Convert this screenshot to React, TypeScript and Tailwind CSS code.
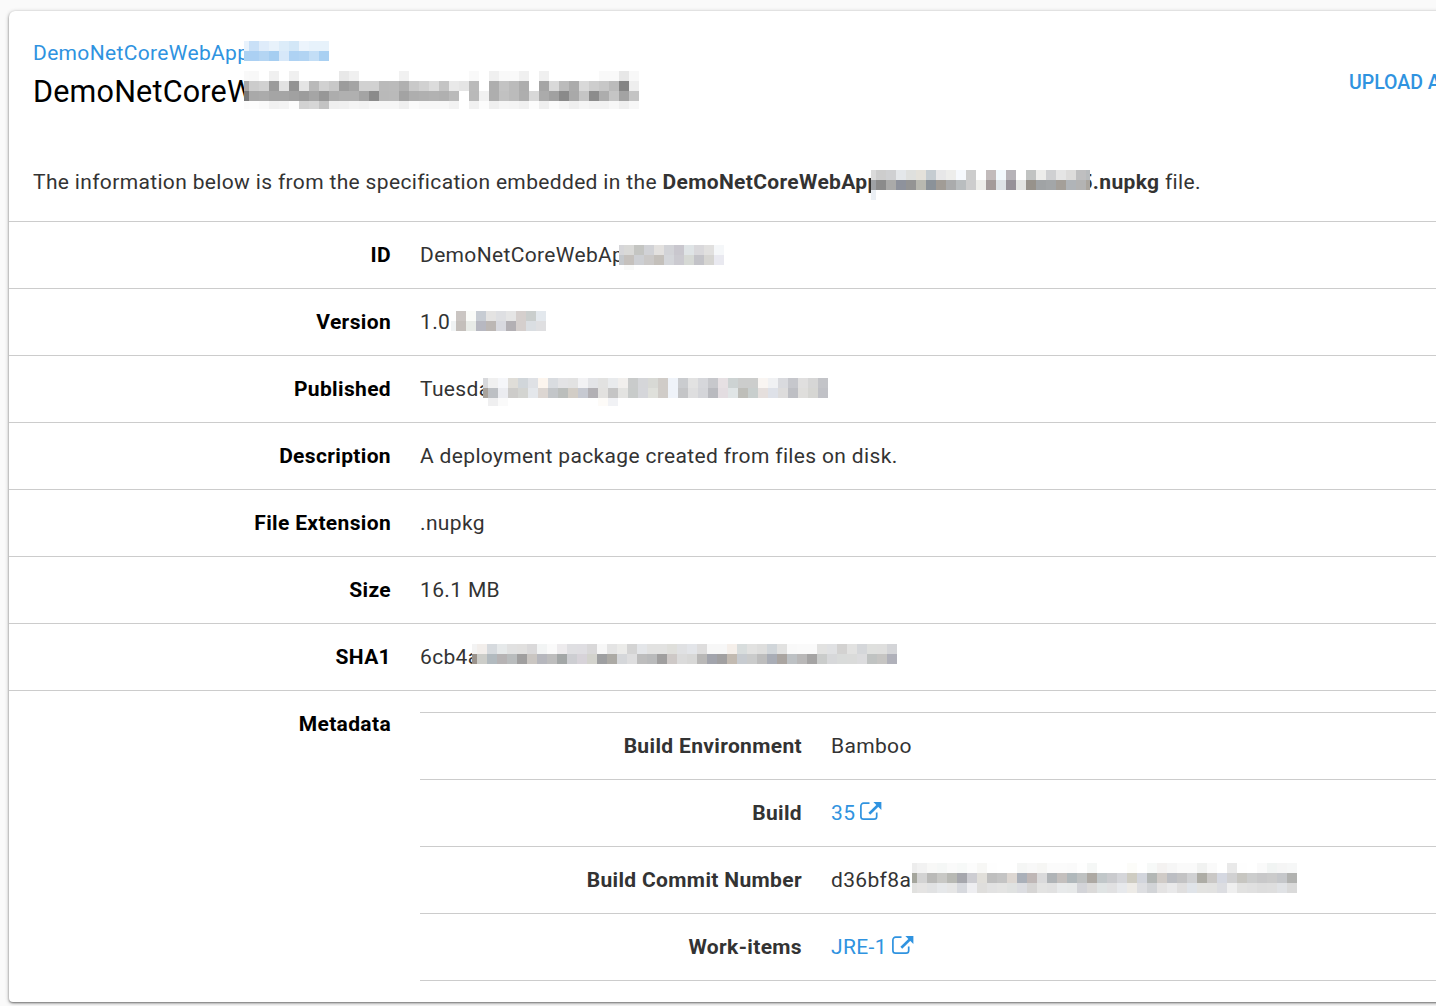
import type { ReactNode } from "react";

type MosaicRow = { h: number; c: string };

const g = (s: string) =>
  s
    .split(" ")
    .map((v) => v + v + v)
    .join(" ");

const linkMosaic: MosaicRow[] = [
  { h: 10, c: "e8f2fc c9e0f7 dfecfa e8f2fb dcecf9 d3e7f7 ecf4fc e7f2fb e7f2fb" },
  { h: 10, c: "abd1f2 abd0f3 b4d5f3 a6cef1 d7e8f9 aed2f3 b2d4f3 c3def6 a9d0f2" },
];

const titleMosaic: MosaicRow[] = [
  { h: 10, c: g("f9 f8 ff f0 ff f0 ff ff ff ff e8 f0 ff ff ff ff f1 ff ff ff ff ff ff f9 ff f0 f9 f9 f0 ff f0 ff ff ff ff ff f9 f9 e7 f8") },
  { h: 10, c: g("a8 cc d1 9b e2 93 e4 b9 d1 c8 9c a4 d1 d1 ba bb b0 c9 d1 dc c4 e9 e5 ba ff ae c3 bb ad ff a5 d9 bb ab d9 cd c7 bb 85 ee") },
  { h: 10, c: g("78 a9 ab a5 a5 a1 9c a5 97 ad b0 b0 a4 8b b9 ba a3 ae b0 b2 b0 ba ff b9 f1 ae c1 bb ae d8 ab a1 8a a9 c5 8c ad c5 a3 c4") },
  { h: 8, c: g("fb fc f9 f1 f3 fc d2 d6 c3 ef f0 f4 f2 f6 f6 f6 ef fa f7 f7 f7 f2 ff f1 fc ef f5 f4 f0 fc ef fa f5 ef f5 f2 f2 f7 ef f7") },
];

const fileMosaic: MosaicRow[] = [
  { h: 10, c: "dadada cdcdcd cfd0d2 e4e7ea dfe0de e4e1da c5ccd1 e7e7e8 ededeb f6f9fd cdcdcd ffffff c2bbbb f2f9fd b6b3b8 ffffff c1c3c2 ededeb cfd0d2 e5e5e5 dddcdb bfbfc0 b8bbbd" },
  { h: 10, c: "9ea1a5 8b8b8b aaaaa9 8e929c 949494 b8b8b0 8b9299 a19c96 aaabac b9bdbf cdcdcd eeeeea a49b9a dde2e6 969198 e3e4e2 97928b a0a3a5 a3a6a8 a49f99 b0b4b8 b3b3b3 aaa59e" },
  { h: 10, c: "ebeff4" },
];

const idMosaic: MosaicRow[] = [
  { h: 10, c: "d6d6d9 d9d9d7 c4c5c2 d1d2d6 e3e1df d2d3d7 c9c7ce dfe4e6 d9d8db e1e0df f5f7f9" },
  { h: 10, c: "c4c8cc c5c1bd cdcfd3 cbc9c8 c4c0bb d4d6da cbcad0 d6d9d5 c3c3c8 d6d5d2 e9e9f0" },
  { h: 5, c: "ffffff f9faf9" },
];

const versionMosaic: MosaicRow[] = [
  { h: 10, c: "ffffff cac5c2 fafbf8 c7ccd3 e4e3e2 dedfe2 e5e5e5 d5cfcd cacecd e3e8ed" },
  { h: 10, c: "f0f3f4 c4bfbb e8ebe7 b7b8c1 bcb7b4 d8d9df b3b0b4 d5cfcd dadee2 dfdfe1" },
];

const dateMosaic: MosaicRow[] = [
  { h: 10, c: "d8d9dc f0f0f0 f5f6f9 dfddd8 d1d6da dfe1e5 fcf5ee d9dce0 e3e3e5 e2e2e2 f2f2f4 e3e4e7 e2e2e1 e9ebed f1efed c9cbcb d5d6d9 d8d9d5 d0ccc8 eff3f9 cacccf e2e2e2 d6d7db c7c8cc e6e0e3 cdd3d3 cccdcc cccdcc f9f5f2 f0f1f3 d9dade c6c7cc e0dfdf d6d6d6 c3c4c8" },
  { h: 10, c: "a9a39c bdc0c4 ebecf0 cdccca d3d4d1 e4e7eb dcd6d2 c3c6c9 bbbebc d2cdc6 c6c9d1 b2b0b4 e2e1df c5c5c5 e3e3e1 c8cbca d5d6da dfe0db d0ccc8 eff3f9 c4c5c7 dededf d4d5d9 b9babf e3dde1 e0e5e6 bebeb9 c8cecd e5dfdd dee1e8 dddcdc bebfc4 dfdedc d6d6d3 c0c1c6" },
  { h: 8, c: "ffffff efeff0 fafafa ffffff ffffff ffffff ffffff ffffff ffffff ffffff ffffff ffffff fdfbf8 f1f2f5" },
];

const shaMosaic: MosaicRow[] = [
  { h: 10, c: "f3f3f3 f2eeeb d6dade e6e9ea e1e1e1 e1e0df dad9da f2f4f4 fafafa edebed dfdfe2 dfdee2 d9d8d9 f7f7f7 e4e4e4 ebebe9 d4d4d4 e4e6e9 e2e2e1 e2e2e1 dfdfdb e0e1e3 e3e5e9 dedddd f7f7f7 f7f7f7 f5efea d8dddd e2e2e1 dededd d1d6da e2e2e1 f9f9f9 fafafa fafafa e2e2e1 e0e1e3 d3d2d1 e2e2e1 d5d7da dfe0de dfdfde d4d5d8" },
  { h: 10, c: "9b938c cccdc9 b2babf b6b3b4 b9bcbd a09f9f cac6c2 b6b7bd bdbdbd a3a7a7 cdced2 d7d3d9 d3d3cd 9e9fa1 acaaa5 d5d7da dededf bdbdbd b9babb a09f9f cec9c7 dbdbdb d8d8d7 b9b8b7 a2a4ac a1a0a1 c2bab1 c7cbd0 cacbcb bdbdbd a9adb6 aaa5a1 bdc1c4 b9b8b8 a5a4a4 cacccb d7d8da d9dbda dadbda dcdcde c0c3c2 c6c5c3 b0b1ba" },
];

const commitMosaic: MosaicRow[] = [
  { h: 10, c: "ededed f2f2f2 f8f8f7 f5f7f6 fafafa f7f9f8 fcfcfc f7f7f5 fefefe ffffff ffffff f5f6f5 f8f8f8 f6f6f4 fbfbfb fbfbfb fafafa fefefe f5f7f6 ffffff ffffff ffffff fcfcf9 ffffff f7f9f8 f4f2f1 f6f6f6 fafafa fafafa f1f2f1 fafafa ffffff e9e9e9 fefefe ffffff fafafa f1f4f3 f5f5f5 f6f7f7" },
  { h: 10, c: "a5a69d d3d3d3 babab8 c8c8c5 b8b9b4 a6a7ad cdcdd2 e1dfda bfbfbf c4c4c4 ddd7d2 aab0b9 bfb7b6 dadadb b0b4b7 c4c0be b0b8bb bec1c1 ada9a3 c1c7c9 cacbce d5d6da ceccc2 d2d5dc b3b7b5 d0cbc7 bcbec3 c3c3c4 d0d1d3 aeada6 cac8c6 d5d8e1 d1d1d2 c7c6c1 cccdcd c8c8c9 cbcbcb c5c7ca b1b2b0" },
  { h: 10, c: "e1e1df e5e4e3 e1e2e3 e6e8ea e6e6e6 d7d9de eeeef1 dfdedc e2e2e2 e4e4e3 e0e2e1 dcdde1 d6d5d4 e3e3e2 e1e1e1 e8eaeb e7e9e9 d3d4d8 dbdad9 e0e4e4 e1e1e2 e7e9ec edebe7 dddee1 d2d4d7 e4e3e3 e9e9ea e0dfdf e0e4e9 e3e3e1 e2e2e1 dcdde1 efefef e2e2e1 e0e0e0 dddddd dedede e0e2e5 dadada" },
];

/* Pixelated redaction laid over the tail of a text */
function Mosaic({ rows, className }: { rows: MosaicRow[]; className: string }) {
  return (
    <span className={`absolute flex flex-col ${className}`} aria-hidden="true">
      {rows.map((row, i) => (
        <span key={i} className="flex" style={{ height: row.h }}>
          {row.c.split(" ").map((c, j) => (
            <span key={j} className="w-2.5 shrink-0 first:w-[5px]" style={{ backgroundColor: `#${c}` }} />
          ))}
        </span>
      ))}
    </span>
  );
}

function ExternalIcon() {
  return (
    <svg className="ml-[5px] h-5 w-[22px] -translate-y-0.5" viewBox="0 0 22 20" fill="none" stroke="currentColor">
      <path d="M9.5 2.2H3.6A2.7 2.7 0 0 0 .9 4.9V15.4A2.7 2.7 0 0 0 3.6 18.1H14A2.7 2.7 0 0 0 16.7 15.4V11.5" strokeWidth="1.7" />
      <path d="M9.3 12.7L18.3 4" strokeWidth="2.6" />
      <path d="M13.4.9H21.4V8.9Z" fill="currentColor" stroke="none" />
    </svg>
  );
}

function Row({ label, children }: { label: string; children: ReactNode }) {
  return (
    <div className="flex h-[67px] items-center border-t border-[#cccccc]">
      <div className="w-[382px] shrink-0 text-right font-bold text-black">{label}</div>
      <div className="relative ml-[29px]">{children}</div>
    </div>
  );
}

function MetaRow({ label, children }: { label: string; children: ReactNode }) {
  return (
    <div className="flex h-[67px] items-center border-t border-[#cccccc]">
      <div className="w-[382px] shrink-0 text-right font-bold">{label}</div>
      <div className="relative ml-[29px]">{children}</div>
    </div>
  );
}

export default function App() {
  return (
    <div className="h-[1006px] overflow-hidden bg-[#fafafa] pt-[11px] pl-[9px] font-[Roboto,sans-serif] text-[21px] leading-[30px] tracking-[0.345px] whitespace-nowrap text-[#333333]">
      <main className="h-[991px] w-[1600px] rounded-t-md rounded-b-sm bg-white shadow-[0_1px_4px_rgba(0,0,0,0.3),0_1px_2px_rgba(0,0,0,0.4)]">
        <header className="flex h-[210px] flex-col pl-6">
          <div className="flex h-[130px] items-start">
            <div className="w-[1316px] shrink-0 pt-[27px]">
              <div className="relative w-fit text-[#2f93e0]">
                <a>DemoNetCoreWebApp</a>
                <Mosaic rows={linkMosaic} className="top-[3px] left-[211px]" />
              </div>
              <h1 className="relative h-10 w-fit text-[30.5px] leading-[48px] tracking-[0.2px] text-black">
                DemoNetCoreW
                <Mosaic rows={titleMosaic} className="top-[3px] left-[211px]" />
              </h1>
            </div>
            <button className="mt-[57px] text-[19.5px] font-medium tracking-normal text-[#2f93e0]">UPLOAD A</button>
          </div>
          <p className="relative mt-[26px]">
            The information below is from the specification embedded in the{" "}
            <b className="inline-block w-[418px]">DemoNetCoreWebApp</b>
            <b>5.nupkg</b> file.
            <Mosaic rows={fileMosaic} className="top-[3px] left-[838px] w-[219px] overflow-hidden" />
          </p>
        </header>
        <Row label="ID">
          DemoNetCoreWebAp
          <Mosaic rows={idMosaic} className="top-[5px] left-[199px]" />
        </Row>
        <Row label="Version">
          1.0
          <Mosaic rows={versionMosaic} className="top-[4px] left-[31px]" />
        </Row>
        <Row label="Published">
          Tuesda
          <Mosaic rows={dateMosaic} className="top-[4px] left-[63px]" />
        </Row>
        <Row label="Description">A deployment package created from files on disk.</Row>
        <Row label="File Extension">.nupkg</Row>
        <Row label="Size">16.1 MB</Row>
        <Row label="SHA1">
          6cb4a
          <Mosaic rows={shaMosaic} className="top-[2px] left-[52px]" />
        </Row>
        <section className="flex border-t border-[#cccccc]">
          <div className="mt-[18px] w-[382px] shrink-0 text-right font-bold text-black">Metadata</div>
          <div className="mt-[21px] ml-[29px] grow border-b border-[#cccccc]">
            <MetaRow label="Build Environment">Bamboo</MetaRow>
            <MetaRow label="Build">
              <a className="flex items-center text-[#2f93e0]">
                35
                <ExternalIcon />
              </a>
            </MetaRow>
            <MetaRow label="Build Commit Number">
              d36bf8a
              <Mosaic rows={commitMosaic} className="top-[-2px] left-[81px]" />
            </MetaRow>
            <MetaRow label="Work-items">
              <a className="flex items-center text-[#2f93e0]">
                JRE-1
                <ExternalIcon />
              </a>
            </MetaRow>
          </div>
        </section>
      </main>
    </div>
  );
}
